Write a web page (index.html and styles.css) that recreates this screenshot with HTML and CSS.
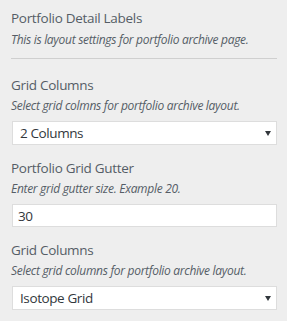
FILE: index.html
```html
<!DOCTYPE html>
<html>
<head>
<meta charset="utf-8">
<link rel="stylesheet" href="styles.css">
</head>
<body>
<div class="panel">
  <div class="section-head">
    <div class="title">Portfolio Detail Labels</div>
    <div class="desc">This is layout settings for portfolio archive page.</div>
  </div>
  <div class="control">
    <div class="title">Grid Columns</div>
    <div class="desc">Select grid colmns for portfolio archive layout.</div>
    <div class="field select"><span>2 Columns</span><span class="arrow"></span></div>
  </div>
  <div class="control">
    <div class="title">Portfolio Grid Gutter</div>
    <div class="desc">Enter grid gutter size. Example 20.</div>
    <div class="field input"><span>30</span></div>
  </div>
  <div class="control">
    <div class="title">Grid Columns</div>
    <div class="desc">Select grid columns for portfolio archive layout.</div>
    <div class="field select"><span>Isotope Grid</span><span class="arrow"></span></div>
  </div>
</div>
</body>
</html>
```
FILE: styles.css
```css
html, body {
  margin: 0;
  padding: 0;
  background: #eeeeee;
}
body {
  font-family: "Open Sans", "Noto Sans", sans-serif;
  color: #555d66;
  width: 287px;
  height: 321px;
  overflow: hidden;
}
.panel {
  padding: 8px 10px 0 11px;
  display: flex;
  flex-direction: column;
}
.section-head {
  border-bottom: 1px solid #cfcfcf;
  padding-bottom: 9px;
  margin-bottom: 16px;
}
.title {
  font-size: 13.5px;
  line-height: 20px;
  color: #555d66;
  letter-spacing: -0.3px;
}
.desc {
  font-size: 12px;
  line-height: 18px;
  font-style: italic;
  color: #555d66;
  letter-spacing: -0.3px;
  margin-top: 2px;
}
.section-head .desc {
  margin-top: 3px;
}
.control {
  display: flex;
  flex-direction: column;
  margin-bottom: 13px;
}
.field {
  margin-top: 6px;
  margin-left: 1px;
  background: #fff;
  border: 1px solid #dddddd;
  box-sizing: border-box;
  display: flex;
  align-items: center;
  justify-content: space-between;
  font-size: 13.5px;
  color: #32373c;
  letter-spacing: -0.4px;
}
.select {
  height: 24px;
  padding: 0 5px 0 7px;
}
.input {
  height: 23px;
  padding: 0 6px 0 5px;
}
.arrow {
  width: 0;
  height: 0;
  border-left: 3px solid transparent;
  border-right: 3px solid transparent;
  border-top: 5px solid #32373c;
}
```
